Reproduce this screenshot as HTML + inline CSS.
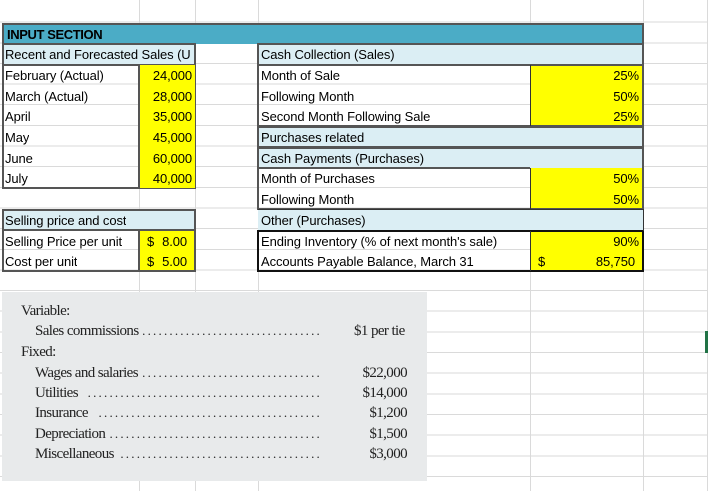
<!DOCTYPE html>
<html><head><meta charset="utf-8"><style>
body{margin:0;width:708px;height:491px;overflow:hidden;background:#fff;position:relative;font-family:"Liberation Sans",sans-serif;}
.grid{position:absolute;left:0;top:0;width:708px;height:491px;
background-image:repeating-linear-gradient(to bottom,transparent 0,transparent 19.65px,#dadada 19.65px,#dadada 20.65px);
background-position:0 2px;}
.v{position:absolute;top:0;height:491px;width:1px;background:#dadada}
.c{position:absolute;box-sizing:border-box;font-size:13px;letter-spacing:-0.1px;line-height:21px;padding-left:3px;white-space:nowrap;overflow:hidden;color:#000}
.y{background:#ffff00}
.lb{background:#dbeef4}
.r{text-align:right;padding-right:3px;padding-left:0}
.box{position:absolute;box-sizing:border-box;border:2px solid #555}
.img{position:absolute;left:2px;top:292px;width:425px;height:189px;background:#e8eaeb;font-family:"Liberation Serif",serif;font-size:15px;color:#222;letter-spacing:-0.6px}
.img div{position:absolute;white-space:nowrap;line-height:20px}
.d{position:absolute;overflow:hidden;white-space:nowrap;letter-spacing:2.2px;font-size:13px;text-align:right;direction:rtl}
</style></head><body>
<div class="grid"></div>
<div class="v" style="left:139px"></div><div class="v" style="left:195px"></div><div class="v" style="left:258px"></div><div class="v" style="left:530px"></div><div class="v" style="left:643px"></div><div class="v" style="left:707px"></div>

<div class="c" style="left:2px;top:23px;width:642px;height:21px;background:#4bacc6;font-weight:bold;border:2px solid #555;border-bottom:none;line-height:19px;letter-spacing:-0.4px">INPUT SECTION</div>

<div class="c lb" style="left:2px;top:44px;width:193px;height:21px">Recent and Forecasted Sales (U</div>
<div class="box" style="left:2px;top:43px;width:194px;height:146px"></div>
<div style="position:absolute;left:2px;top:64px;width:194px;height:2px;background:#555"></div>
<div class="c y r" style="left:139px;top:65px;width:56px;height:123px"></div>
<div style="position:absolute;left:138px;top:65px;width:2px;height:123px;background:#555"></div>
<div class="c" style="left:2px;top:65px">February (Actual)</div><div class="c r" style="left:139px;top:65px;width:56px">24,000</div>
<div class="c" style="left:2px;top:86px">March (Actual)</div><div class="c r" style="left:139px;top:86px;width:56px">28,000</div>
<div class="c" style="left:2px;top:106px">April</div><div class="c r" style="left:139px;top:106px;width:56px">35,000</div>
<div class="c" style="left:2px;top:127px">May</div><div class="c r" style="left:139px;top:127px;width:56px">45,000</div>
<div class="c" style="left:2px;top:148px">June</div><div class="c r" style="left:139px;top:148px;width:56px">60,000</div>
<div class="c" style="left:2px;top:168px">July</div><div class="c r" style="left:139px;top:168px;width:56px">40,000</div>

<div class="c lb" style="left:2px;top:209px;width:194px;height:21px"></div>
<div class="box" style="left:2px;top:209px;width:194px;height:63px"></div>
<div style="position:absolute;left:2px;top:229px;width:194px;height:2px;background:#555"></div>
<div class="c y" style="left:140px;top:231px;width:54px;height:39px"></div>
<div style="position:absolute;left:138px;top:230px;width:2px;height:41px;background:#555"></div>
<div class="c" style="left:2px;top:210px">Selling price and cost</div>
<div class="c" style="left:2px;top:231px">Selling Price per unit</div>
<div class="c" style="left:2px;top:251px">Cost per unit</div>
<div class="c" style="left:144px;top:231px">$</div><div class="c r" style="left:140px;top:231px;width:50px">8.00</div>
<div class="c" style="left:144px;top:251px">$</div><div class="c r" style="left:140px;top:251px;width:50px">5.00</div>

<div class="c lb" style="left:258px;top:44px;width:386px;height:21px"></div>
<div class="c lb" style="left:258px;top:126px;width:386px;height:42px"></div>
<div class="c lb" style="left:258px;top:209px;width:386px;height:21px"></div>
<div class="c y" style="left:530px;top:65px;width:113px;height:61px"></div>
<div class="c y" style="left:530px;top:168px;width:113px;height:41px"></div>
<div class="c y" style="left:530px;top:231px;width:113px;height:40px"></div>
<div class="box" style="left:257px;top:43px;width:387px;height:84px"></div>
<div style="position:absolute;left:257px;top:64px;width:387px;height:2px;background:#555"></div>
<div style="position:absolute;left:530px;top:65px;width:1px;height:61px;background:#333"></div>
<div class="box" style="left:257px;top:126px;width:387px;height:22px"></div>
<div class="box" style="left:257px;top:147px;width:387px;height:63px"></div>
<div style="position:absolute;left:257px;top:167px;width:273px;height:2px;background:#555"></div>
<div style="position:absolute;left:530px;top:168px;width:1px;height:42px;background:#333"></div>
<div style="position:absolute;left:258px;top:209px;width:386px;height:1px;background:#333"></div>
<div style="position:absolute;left:258px;top:230px;width:386px;height:1px;background:#333"></div>
<div style="position:absolute;left:257px;top:230px;width:387px;height:42px;border:2px solid #111;box-sizing:border-box"></div>
<div style="position:absolute;left:530px;top:231px;width:1px;height:40px;background:#333"></div>
<div style="position:absolute;left:643px;top:209px;width:1px;height:22px;background:#333"></div>

<div class="c" style="left:258px;top:44px">Cash Collection (Sales)</div>
<div class="c" style="left:258px;top:65px">Month of Sale</div><div class="c r" style="left:530px;top:65px;width:112px">25%</div>
<div class="c" style="left:258px;top:86px">Following Month</div><div class="c r" style="left:530px;top:86px;width:112px">50%</div>
<div class="c" style="left:258px;top:106px">Second Month Following Sale</div><div class="c r" style="left:530px;top:106px;width:112px">25%</div>
<div class="c" style="left:258px;top:127px">Purchases related</div>
<div class="c" style="left:258px;top:148px">Cash Payments (Purchases)</div>
<div class="c" style="left:258px;top:168px">Month of Purchases</div><div class="c r" style="left:530px;top:168px;width:112px">50%</div>
<div class="c" style="left:258px;top:189px">Following Month</div><div class="c r" style="left:530px;top:189px;width:112px">50%</div>
<div class="c" style="left:258px;top:210px">Other (Purchases)</div>
<div class="c" style="left:258px;top:231px">Ending Inventory (% of next month's sale)</div><div class="c r" style="left:530px;top:231px;width:112px">90%</div>
<div class="c" style="left:258px;top:251px">Accounts Payable Balance, March 31</div>
<div class="c" style="left:535px;top:251px">$</div><div class="c r" style="left:530px;top:251px;width:108px">85,750</div>

<div style="position:absolute;left:705px;top:331px;width:3px;height:22px;background:#217346"></div>

<div class="img">
<div style="left:19px;top:9px">Variable:</div>
<div style="left:33px;top:29px">Sales commissions</div><div class="d" style="left:141px;top:29px;width:179px">..........................................</div>
<div style="left:352px;top:29px">$1 per tie</div>
<div style="left:19px;top:50px">Fixed:</div>
<div style="left:33px;top:71px">Wages and salaries</div><div class="d" style="left:141px;top:71px;width:179px">..........................................</div>
<div style="left:33px;top:91px">Utilities</div><div class="d" style="left:84px;top:91px;width:236px">.......................................................</div>
<div style="left:33px;top:111px">Insurance</div><div class="d" style="left:97px;top:111px;width:223px">.......................................................</div>
<div style="left:33px;top:132px">Depreciation</div><div class="d" style="left:108px;top:132px;width:212px">.......................................................</div>
<div style="left:33px;top:152px">Miscellaneous</div><div class="d" style="left:116px;top:152px;width:204px">.......................................................</div>
<div style="right:20px;top:71px">$22,000</div>
<div style="right:20px;top:91px">$14,000</div>
<div style="right:20px;top:111px">$1,200</div>
<div style="right:20px;top:132px">$1,500</div>
<div style="right:20px;top:152px">$3,000</div>
</div>
</body></html>
